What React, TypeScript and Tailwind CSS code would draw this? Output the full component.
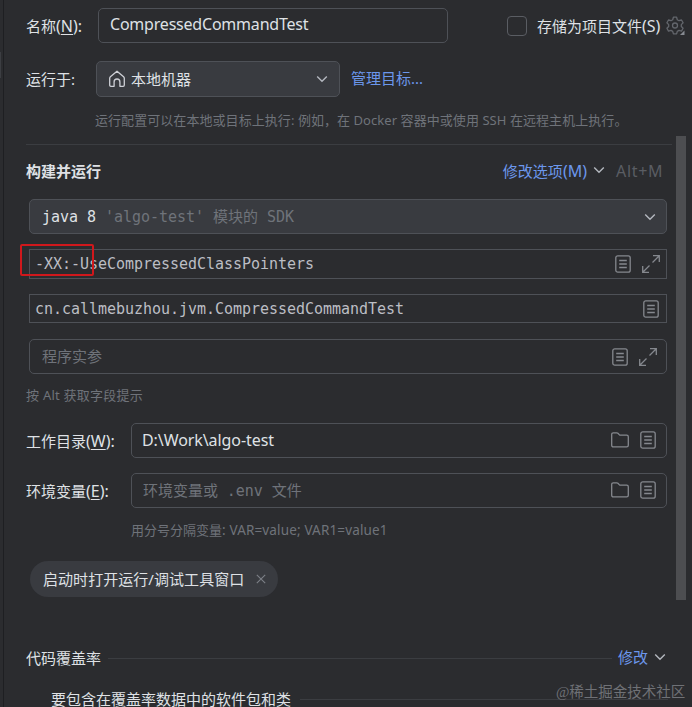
import type { ReactNode } from "react";

function ChevronDown({ className = "" }: { className?: string }) {
  return (
    <svg
      width="12"
      height="8"
      viewBox="0 0 12 8"
      fill="none"
      stroke="#b4b8bf"
      strokeWidth="1.4"
      className={`shrink-0 ${className}`}
    >
      <path d="M1.2 1.5 6 6.2l4.8-4.7" />
    </svg>
  );
}

function HomeIcon() {
  return (
    <svg
      width="18"
      height="18"
      viewBox="0 0 18 18"
      fill="none"
      stroke="#ced0d6"
      strokeWidth="1.3"
      strokeLinejoin="round"
      className="shrink-0"
    >
      <path d="M1.7 8.3c0-.7.2-1 .7-1.5L9 1.2l6.6 5.6c.5.5.7.8.7 1.5v6.8c0 .8-.4 1.2-1.2 1.2h-3.2v-4.4a2.9 2.9 0 0 0-5.8 0v4.4H2.9c-.8 0-1.2-.4-1.2-1.2z" />
    </svg>
  );
}

function GearIcon() {
  return (
    <svg
      width="20"
      height="20"
      viewBox="0 0 20 20"
      fill="none"
      stroke="#63666c"
      strokeWidth="1.3"
      strokeLinejoin="round"
      className="shrink-0"
    >
      <path d="M7.4 1.2h3.2l.7 2.5 1.7 1 2.5-.7 1.6 2.800-1.800 1.800v1.900l1.800 1.800-1.600 2.800-2.500-.7-1.700 1-.7 2.400H7.400l-.7-2.400-1.700-1-2.500.7-1.600-2.800 1.800-1.800V8.600L.9 6.800 2.500 4l2.500.7 1.700-1z" />
      <circle cx="9" cy="9.5" r="2.5" />
      <path d="M18.5 14.5V19H14z" fill="#868a91" stroke="none" />
    </svg>
  );
}

function ListIcon() {
  return (
    <svg
      width="16"
      height="18"
      viewBox="0 0 16 18"
      fill="none"
      stroke="#85888e"
      strokeWidth="1.3"
      className="shrink-0"
    >
      <rect x="0.8" y="0.8" width="14.4" height="16.4" rx="2" />
      <path d="M4.2 5.5h7.6M4.2 9h7.6M4.2 12.5h7.6" />
    </svg>
  );
}

function ExpandIcon() {
  return (
    <svg
      width="20"
      height="20"
      viewBox="0 0 20 20"
      fill="none"
      stroke="#85888e"
      strokeWidth="1.3"
      className="shrink-0"
    >
      <path d="M11.5 8.500 18 2M12 1.700h6.300V8M8.500 11.500 2 18M1.700 12v6.300H8" />
    </svg>
  );
}

function FolderIcon() {
  return (
    <svg
      width="18"
      height="16"
      viewBox="0 0 18 16"
      fill="none"
      stroke="#85888e"
      strokeWidth="1.3"
      strokeLinejoin="round"
      className="shrink-0"
    >
      <path d="M.7 2.5c0-1 .6-1.6 1.6-1.6h3.5c.5 0 .8.1 1.1.4l1.8 1.8h7c1 0 1.600.6 1.600 1.600v8.600c0 1-.6 1.600-1.600 1.600H2.300c-1 0-1.600-.6-1.600-1.600z" />
    </svg>
  );
}

function CloseIcon() {
  return (
    <svg width="10" height="10" viewBox="0 0 10 10" stroke="#7d8087" strokeWidth="1.1">
      <path d="m.8.8 8.400 8.400M9.200.8.8 9.200" />
    </svg>
  );
}

function Field({ className = "", children }: { className?: string; children: ReactNode }) {
  return (
    <div className={`flex items-center border border-[#4e5157] ${className}`}>{children}</div>
  );
}

const mono = "font-['DejaVu_Sans_Mono','Noto_Sans_CJK_SC',monospace] text-[15px] tracking-[-0.03px]";

function App() {
  return (
    <div className="relative flex h-[707px] w-[692px] overflow-hidden bg-[#2b2c2f] font-['Noto_Sans','Noto_Sans_CJK_SC',sans-serif] text-[15px] leading-5 whitespace-nowrap text-[#dfe1e5]">
      <div className="w-1 shrink-0 border-r border-[#1e1f22] pt-[52px]">
        <div className="h-[26px] w-px bg-[#3c3e42]"></div>
      </div>

      <div className="flex min-w-0 flex-1 flex-col">
        <header className="h-[136px] shrink-0 pt-2 pl-[22px]">
          <div className="flex h-[35px] items-center">
            <label className="w-[72px] pt-px">
              名称<span className="text-[16px]">(<u className="underline-offset-2">N</u>):</span>
            </label>
            <Field className="h-[35px] w-[350px] rounded-[5px] pl-[11px]">
              <span className="pb-[3px] text-[16px] tracking-[-0.21px]">CompressedCommandTest</span>
            </Field>
            <div className="ml-[59px] size-5 rounded-[4px] border border-[#5a5d63]"></div>
            <span className="ml-2.5 w-[129px] pt-px">
              存储为项目文件<span className="text-[16px]">(S)</span>
            </span>
            <GearIcon />
          </div>

          <div className="mt-[18px] flex h-9 items-center">
            <label className="w-[70px]">运行于:</label>
            <Field className="h-9 w-[244px] rounded-[5px] bg-[#393b40] pr-[11px] pl-[11px]">
              <HomeIcon />
              <span className="ml-[5px] flex-1">本地机器</span>
              <ChevronDown />
            </Field>
            <a className="ml-[11px] pb-0.5 text-[#6c97ec]">管理目标...</a>
          </div>

          <p className="mt-[13px] ml-[69px] text-[13px] tracking-[0.06px] text-[#6f737a]">
            运行配置可以在本地或目标上执行: 例如，在 Docker 容器中或使用 SSH 在远程主机上执行。
          </p>
        </header>

        <div className="flex flex-1">
          <main className="w-[672px] pt-2">
            <div className="ml-[22px] h-px w-[646px] bg-[#3b3d41]"></div>

            <div className="mt-4 mr-3 ml-[22px] flex h-5 items-center">
              <h2 className="flex-1 font-bold">构建并运行</h2>
              <a className="text-[#6c97ec]">
                修改选项<span className="text-[16px]">(M)</span>
              </a>
              <ChevronDown className="mr-[11px] mb-0.5 ml-1.5" />
              <span className="w-12 text-[16px] tracking-[0.7px] text-[#5a5d63]">Alt+M</span>
            </div>

            <Field className="mt-[18px] ml-[25px] h-[35px] w-[638px] rounded-[5px] bg-[#393b40] pr-2.5 pl-3">
              <span className={`flex-1 ${mono}`}>
                java 8 <span className="text-[#6f737a]">'algo-test' 模块的 SDK</span>
              </span>
              <ChevronDown />
            </Field>

            <Field className="mt-[15px] ml-[25px] h-[30px] w-[638px] gap-2.5 pr-[5px] pb-px pl-[5px]">
              <span className={`flex-1 text-[#bcbec4] ${mono}`}>-XX:-UseCompressedClassPointers</span>
              <ListIcon />
              <ExpandIcon />
            </Field>

            <Field className="mt-[15px] ml-[25px] h-[29px] w-[638px] pr-[7px] pl-[5px]">
              <span className={`flex-1 text-[#bcbec4] ${mono}`}>
                cn.callmebuzhou.jvm.CompressedCommandTest
              </span>
              <ListIcon />
            </Field>

            <Field className="mt-4 ml-[25px] h-[35px] w-[638px] gap-2.5 rounded-[5px] pr-2 pl-3">
              <span className={`flex-1 text-[#6f737a] ${mono}`}>程序实参</span>
              <ListIcon />
              <ExpandIcon />
            </Field>

            <p className="mt-[11px] ml-[22px] text-[13px] tracking-[0.25px] text-[#6f737a]">
              按 Alt 获取字段提示
            </p>

            <div className="mt-[18px] ml-[22px] flex h-[35px] items-center">
              <label className="w-[105px] pt-px">
                工作目录<span className="text-[16px]">(<u className="underline-offset-2">W</u>):</span>
              </label>
              <Field className="h-[35px] w-[536px] rounded-[5px] pr-2.5 pb-px pl-2.5">
                <span className="flex-1 pb-px text-[16px] tracking-[-0.08px]">D:\Work\algo-test</span>
                <FolderIcon />
                <div className="w-[11px]"></div>
                <ListIcon />
              </Field>
            </div>

            <div className="mt-[15px] ml-[22px] flex h-[35px] items-center">
              <label className="w-[105px]">
                环境变量<span className="text-[16px]">(<u className="underline-offset-2">E</u>):</span>
              </label>
              <Field className="h-[35px] w-[536px] rounded-[5px] pr-2.5 pb-px pl-[11px]">
                <span className={`flex-1 pt-0.5 text-[#6f737a] ${mono}`}>环境变量或 .env 文件</span>
                <FolderIcon />
                <div className="w-[11px]"></div>
                <ListIcon />
              </Field>
            </div>

            <p className="mt-3 ml-[127px] text-[13px] text-[#6f737a]">
              用分号分隔变量<span className="text-[13.5px] tracking-[0.15px]">: VAR=value; VAR1=value1</span>
            </p>

            <div className="mt-[21px] ml-[26px] flex h-9 w-[248px] items-center rounded-full bg-[#393b40] pl-[13px]">
              <span className="w-[213px] tracking-[0.05px]">启动时打开运行/调试工具窗口</span>
              <CloseIcon />
            </div>

            <div className="mt-[51px] ml-[22px] flex h-5 w-[640px] items-center">
              <span>代码覆盖率</span>
              <div className="mr-1.5 ml-[7px] h-px flex-1 bg-[#3b3d41]"></div>
              <a className="pb-0.5 text-[#6c97ec]">修改</a>
              <ChevronDown className="mb-0.5 ml-1.5" />
            </div>

            <div className="mt-[22px] ml-[47px] flex h-[18px] w-[617px] items-center leading-4">
              <span>要包含在覆盖率数据中的软件包和类</span>
              <div className="ml-[9px] h-px flex-1 bg-[#3b3d41]"></div>
            </div>
          </main>
          <div className="h-[464px] w-2.5 bg-[#4d4e51]"></div>
        </div>
      </div>

      {/* highlight around the -XX flag */}
      <div className="absolute top-[244px] left-[20px] h-8 w-[74px] rounded-[2px] border-2 border-[#d0181c]"></div>

      <span className="absolute top-[682px] left-[556px] font-['Liberation_Serif','Noto_Sans_CJK_SC',serif] text-[14.5px] text-[#6f7176]">
        @稀土掘金技术社区
      </span>
    </div>
  );
}

export default App;
